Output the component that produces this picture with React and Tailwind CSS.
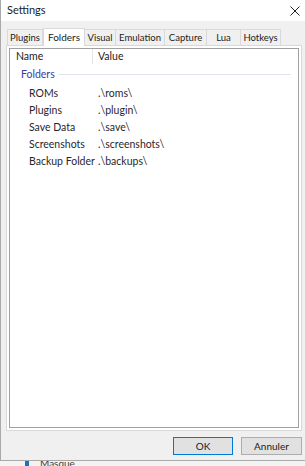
import React, { useState } from 'react';

const font = { fontFamily: 'Lato, "Liberation Sans", sans-serif' };

function App() {
  const [activeTab, setActiveTab] = useState('folders');

  const tabs = [
    { id: 'plugins', label: 'Plugins', w: 'w-[36px]' },
    { id: 'folders', label: 'Folders', w: 'w-[42px]' },
    { id: 'visual', label: 'Visual', w: 'w-[32px]' },
    { id: 'emulation', label: 'Emulation', w: 'w-[50px]' },
    { id: 'capture', label: 'Capture', w: 'w-[43px]' },
    { id: 'lua', label: 'Lua', w: 'w-[35px]' },
    { id: 'hotkeys', label: 'Hotkeys', w: 'w-[41px]' }
  ];

  const rows = [
    ['ROMs', '.\\roms\\'],
    ['Plugins', '.\\plugin\\'],
    ['Save Data', '.\\save\\'],
    ['Screenshots', '.\\screenshots\\'],
    ['Backup Folder', '.\\backups\\']
  ];

  return (
    <div className="w-[305px] h-[466px] bg-white overflow-hidden flex flex-col text-[#1b1b1b]" style={font}>
      {/* Window */}
      <div className="h-[461px] flex flex-col bg-[#f0f0f0] border-l border-b border-[#a9a9a9]">
        {/* Title bar */}
        <div className="h-[21px] bg-white flex items-center justify-between pl-[6px] pr-[4px]">
          <span className="text-[11px]">Settings</span>
          <svg width="10" height="10" viewBox="0 0 10 10" className="mr-[1px]">
            <path d="M0.5 0.5L9.5 9.5M9.5 0.5L0.5 9.5" stroke="#222" strokeWidth="1" />
          </svg>
        </div>

        {/* Tabs */}
        <div className="flex items-end pl-[6px] pt-[7px] h-[24px]">
          {tabs.map(tab =>
            activeTab === tab.id ? (
              <button
                key={tab.id}
                onClick={() => setActiveTab(tab.id)}
                className={`${tab.w} h-[18px] -mb-px relative z-10 bg-white border border-b-0 border-[#d9d9d9] text-[10px] leading-none flex items-start justify-center pt-[3px]`}
              >
                {tab.label}
              </button>
            ) : (
              <button
                key={tab.id}
                onClick={() => setActiveTab(tab.id)}
                className={`${tab.w} h-[16px] -ml-px first:ml-0 bg-[#f0f0f0] border border-b-0 border-[#d9d9d9] text-[9.5px] leading-none flex items-center justify-center`}
              >
                {tab.label}
              </button>
            )
          )}
        </div>

        {/* Tab panel */}
        <div className="ml-[5px] mr-[3px] h-[386px] bg-white border border-[#d9d9d9] p-[2px]">
          <div className="h-full border border-[#a0a0a0] flex flex-col">
            {/* Header */}
            <div className="h-[15px] flex text-[10.5px] leading-none">
              <div className="w-[83px] border-r border-[#e5e5e5] pl-[6px] flex items-center">Name</div>
              <div className="pl-[5px] flex items-center">Value</div>
            </div>

            {/* Group header */}
            <div className="h-[21px] flex items-center pl-[11px] pr-[7px] gap-[4px]">
              <span className="text-[10.5px] text-[#3b3ba6] leading-none">Folders</span>
              <div className="flex-1 h-px bg-[#dfe3ec]" />
            </div>

            {rows.map(([name, value]) => (
              <div key={name} className="h-[17px] flex items-center text-[10.5px] leading-none text-[#2a1f2e]">
                <div className="w-[88px] pl-[19px] whitespace-nowrap">{name}</div>
                <div>{value}</div>
              </div>
            ))}
          </div>
        </div>

        {/* Buttons */}
        <div className="flex justify-end gap-[8px] pr-[3px] mt-[6px]">
          <button className="w-[60px] h-[18px] bg-[#e1e1e1] border border-[#0078d7] text-[10px] leading-none">OK</button>
          <button className="w-[61px] h-[18px] bg-[#e1e1e1] border border-[#adadad] text-[10px] leading-none">Annuler</button>
        </div>
      </div>

      {/* Window behind */}
      <div className="flex-1 flex items-start pl-[25px] gap-[11px] bg-[#f3f3f3] overflow-hidden">
        <div className="w-[4px] h-[5px] bg-[#1f6fc4]" />
        <span className="text-[10px] leading-none text-[#444] -mt-[3px]">Masque</span>
      </div>
    </div>
  );
}

export default App;
